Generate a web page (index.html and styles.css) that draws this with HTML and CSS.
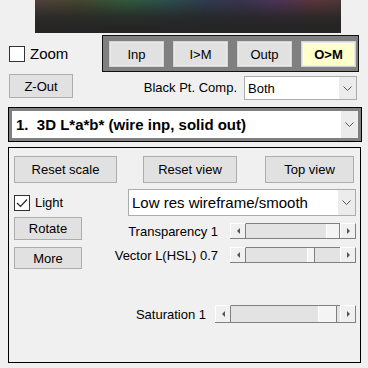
FILE: index.html
```html
<!DOCTYPE html>
<html lang="en">
<head>
    <meta charset="UTF-8">
    <title>3D gamut view</title>
    <link rel="stylesheet" href="styles.css">
</head>
<body>
    <div class="preview"></div>

    <div class="row-top">
        <label class="check big"><span class="box"></span>Zoom</label>
        <div class="modes">
            <button class="btn mode">Inp</button>
            <button class="btn mode">I&gt;M</button>
            <button class="btn mode">Outp</button>
            <button class="btn mode active">O&gt;M</button>
        </div>
    </div>

    <div class="row-bpc">
        <button class="btn zout">Z-Out</button>
        <span class="bpc-label">Black Pt. Comp.</span>
        <div class="select bpc">
            <span>Both</span>
            <span class="drop"><svg width="9" height="5" viewBox="0 0 9 5"><path d="M0.5 0.5 L4.5 4.5 L8.5 0.5" fill="none" stroke="#555" stroke-width="1"/></svg></span>
        </div>
    </div>

    <div class="main-select">
        <div class="main-inner">
            <span>1.&nbsp; 3D L*a*b* (wire inp, solid out)</span>
            <span class="drop"><svg width="9" height="5" viewBox="0 0 9 5"><path d="M0.5 0.5 L4.5 4.5 L8.5 0.5" fill="none" stroke="#555" stroke-width="1"/></svg></span>
        </div>
    </div>

    <div class="panel">
        <div class="view-btns">
            <button class="btn reset-scale">Reset scale</button>
            <button class="btn reset-view">Reset view</button>
            <button class="btn top-view">Top view</button>
        </div>

        <div class="render-row">
            <label class="check"><span class="box"><svg width="14" height="14" viewBox="0 0 14 14"><path d="M2 7 L5.5 10.5 L12 3.5" fill="none" stroke="#222" stroke-width="1.2"/></svg></span>Light</label>
            <div class="select render">
                <span>Low res wireframe/smooth</span>
                <span class="drop"><svg width="9" height="5" viewBox="0 0 9 5"><path d="M0.5 0.5 L4.5 4.5 L8.5 0.5" fill="none" stroke="#555" stroke-width="1"/></svg></span>
            </div>
        </div>

        <div class="lower">
            <div class="side">
                <button class="btn side-btn">Rotate</button>
                <button class="btn side-btn more">More</button>
            </div>
            <div class="sliders">
                <div class="slider-row first">
                    <span>Transparency 1</span>
                    <div class="scroll">
                        <span class="arr left"></span>
                        <div class="track"><span class="fill" style="width:80px"></span><span class="thumb" style="width:14px"></span><span class="rest"></span></div>
                        <span class="arr right"></span>
                    </div>
                </div>
                <div class="slider-row second">
                    <span>Vector L(HSL) 0.7</span>
                    <div class="scroll">
                        <span class="arr left"></span>
                        <div class="track"><span class="fill" style="width:61px"></span><span class="thumb" style="width:8px"></span><span class="rest"></span></div>
                        <span class="arr right"></span>
                    </div>
                </div>
                <div class="slider-row third">
                    <span>Saturation 1</span>
                    <div class="scroll wide">
                        <span class="arr left"></span>
                        <div class="track"><span class="fill" style="width:87px"></span><span class="thumb" style="width:19px"></span><span class="rest"></span></div>
                        <span class="arr right"></span>
                    </div>
                </div>
            </div>
        </div>
    </div>
</body>
</html>
```

FILE: styles.css
```css
/* Basic styling */
body {
    margin: 0;
    width: 368px;
    height: 368px;
    overflow: hidden;
    background-color: #f0f0f0;
    color: #000;
    font-family: "Liberation Sans", Arial, sans-serif;
    font-size: 13px;
}

.preview {
    margin-left: 35px;
    width: 306px;
    height: 33px;
    background:
        linear-gradient(to bottom, rgba(37,37,37,0) 0, rgba(37,37,37,0.8) 50%, #252525 80%),
        linear-gradient(to right, #52403c 0%, #45452f 14%, #2f5a3b 30%, #2b504b 42%, #2f3b4f 56%, #3a3450 68%, #4a3358 78%, #5c3538 92%, #4c3838 100%);
}

/* Top rows */
.row-top {
    display: flex;
    align-items: center;
    margin-top: 2px;
    padding: 0 9px 0 9px;
}

.check {
    display: flex;
    align-items: center;
    gap: 5px;
}

.check.big {
    font-size: 15px;
}

.box {
    width: 16px;
    height: 16px;
    box-sizing: border-box;
    border: 1px solid #333;
    background: #fff;
    display: flex;
    align-items: center;
    justify-content: center;
}

.modes {
    margin-left: auto;
    display: flex;
    gap: 9px;
    border: 1px solid #111;
    background: #808080;
    padding: 5px 2px 4px 6px;
}

.btn {
    font-family: inherit;
    font-size: 13px;
    color: #000;
    background: #e1e1e1;
    border: 1px solid #adadad;
    padding: 0;
    box-sizing: border-box;
}

.mode {
    width: 55px;
    height: 26px;
    border-color: #d2d2d2;
    box-shadow: inset 0 0 0 1px #ebebeb;
}

.mode.active {
    background: #ffffcc;
    font-weight: bold;
}

.row-bpc {
    display: flex;
    align-items: flex-start;
    margin-top: 2px;
    padding: 0 11px 0 9px;
}

.zout {
    width: 64px;
    height: 24px;
}

.bpc-label {
    margin-left: auto;
    margin-right: 7px;
    margin-top: 2px;
    line-height: 24px;
}

.select {
    display: flex;
    align-items: center;
    background: #fff;
    border: 1px solid #acacac;
    box-sizing: border-box;
    padding-left: 3px;
}

.drop {
    margin-left: auto;
    width: 17px;
    align-self: stretch;
    background: #ececec;
    display: flex;
    align-items: center;
    justify-content: center;
}

.select.bpc {
    width: 113px;
    height: 24px;
    margin-top: 2px;
}

/* Mode selector */
.main-select {
    margin: 7px 6px 0 8px;
    height: 35px;
    box-sizing: border-box;
    border: 1px solid #000;
    background: #808080;
    padding: 3px;
}

.main-inner {
    height: 100%;
    display: flex;
    align-items: center;
    background: #fff;
    padding-left: 4px;
    font-size: 15px;
    font-weight: bold;
}

/* Panel */
.panel {
    margin: 5px 7px 0 8px;
    height: 216px;
    box-sizing: border-box;
    border: 1px solid #000;
    padding: 8px 4px 0 5px;
}

.view-btns {
    display: flex;
}

.view-btns .btn {
    height: 27px;
}

.reset-scale {
    width: 103px;
}

.reset-view {
    width: 94px;
    margin-left: 26px;
}

.top-view {
    width: 89px;
    margin-left: 28px;
}

.render-row {
    display: flex;
    align-items: center;
    margin-top: 6px;
}

.select.render {
    margin-left: auto;
    width: 228px;
    height: 27px;
    font-size: 15px;
}

.lower {
    display: flex;
    margin-top: 1px;
}

.side {
    display: flex;
    flex-direction: column;
    gap: 7px;
}

.side-btn {
    width: 68px;
    height: 23px;
}

.side-btn.more {
    height: 22px;
}

.sliders {
    flex: 1;
    display: flex;
    flex-direction: column;
}

.slider-row {
    display: flex;
    align-items: center;
    justify-content: flex-end;
    gap: 12px;
}

.slider-row.first {
    margin-top: 6px;
}

.slider-row.second {
    margin-top: 8px;
}

.slider-row.third {
    margin-top: 42px;
    gap: 9px;
}

/* Scrollbars */
.scroll {
    display: flex;
    width: 126px;
    height: 16px;
    box-sizing: border-box;
    border-bottom: 1px solid #808080;
    background: #e3e3e3;
}

.scroll.wide {
    width: 141px;
    height: 18px;
}

.arr {
    width: 14px;
    background: #f0f0f0;
    border-top: 1px solid #fff;
    border-left: 1px solid #fff;
    border-right: 1px solid #808080;
    display: flex;
    align-items: center;
    justify-content: center;
}

.arr::before {
    content: "";
    border-top: 3px solid transparent;
    border-bottom: 3px solid transparent;
}

.arr.left::before {
    border-right: 3px solid #555;
}

.arr.right::before {
    border-left: 3px solid #555;
}

.track {
    flex: 1;
    display: flex;
    border-top: 1px solid #808080;
}

.thumb {
    background: #f4f4f4;
    border-left: 1px solid #fff;
    border-right: 1px solid #808080;
    box-sizing: border-box;
}

.rest {
    flex: 1;
}
```
